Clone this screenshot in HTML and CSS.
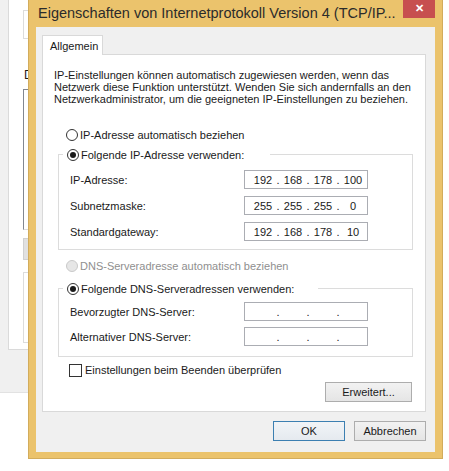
FILE: index.html
```html
<!DOCTYPE html>
<html lang="de">
<head>
    <meta charset="UTF-8">
    <title>Eigenschaften von Internetprotokoll Version 4 (TCP/IPv4)</title>
    <link rel="stylesheet" href="styles.css">
</head>
<body>
    <div class="desk">
        <!-- window behind the dialog -->
        <div class="backwin">
            <div class="bw-panel">
                <div class="bw-box bw-top"></div>
                <div class="bw-caption">D</div>
                <div class="bw-box bw-list"></div>
                <div class="bw-btn"></div>
                <div class="bw-box bw-desc"></div>
            </div>
        </div>

        <div class="dialog">
            <div class="titlebar">
                <span class="title">Eigenschaften von Internetprotokoll Version 4 (TCP/IP...</span>
                <span class="close">&#x2715;</span>
            </div>
            <div class="client">
                <div class="tabs"><div class="tab">Allgemein</div></div>
                <div class="panel">
                    <p class="intro">IP-Einstellungen können automatisch zugewiesen werden, wenn das<br>Netzwerk diese Funktion unterstützt. Wenden Sie sich andernfalls an den<br>Netzwerkadministrator, um die geeigneten IP-Einstellungen zu beziehen.</p>

                    <div class="option opt-ip-auto"><span class="radio"></span>IP-Adresse automatisch beziehen</div>

                    <div class="group group-ip">
                        <div class="legend legend-ip"><span class="radio checked"></span>Folgende IP-Adresse verwenden:</div>
                        <div class="field-row first">
                            <span class="field-label">IP-Adresse:</span>
                            <div class="ipbox"><span>192</span><i>.</i><span>168</span><i>.</i><span>178</span><i>.</i><span>100</span></div>
                        </div>
                        <div class="field-row">
                            <span class="field-label">Subnetzmaske:</span>
                            <div class="ipbox"><span>255</span><i>.</i><span>255</span><i>.</i><span>255</span><i>.</i><span>0</span></div>
                        </div>
                        <div class="field-row">
                            <span class="field-label">Standardgateway:</span>
                            <div class="ipbox"><span>192</span><i>.</i><span>168</span><i>.</i><span>178</span><i>.</i><span>10</span></div>
                        </div>
                    </div>

                    <div class="option opt-dns-auto disabled"><span class="radio"></span>DNS-Serveradresse automatisch beziehen</div>

                    <div class="group group-dns">
                        <div class="legend legend-dns"><span class="radio checked"></span>Folgende DNS-Serveradressen verwenden:</div>
                        <div class="field-row first">
                            <span class="field-label">Bevorzugter DNS-Server:</span>
                            <div class="ipbox"><span></span><i>.</i><span></span><i>.</i><span></span><i>.</i><span></span></div>
                        </div>
                        <div class="field-row">
                            <span class="field-label">Alternativer DNS-Server:</span>
                            <div class="ipbox"><span></span><i>.</i><span></span><i>.</i><span></span><i>.</i><span></span></div>
                        </div>
                    </div>

                    <div class="option opt-check"><span class="checkbox"></span>Einstellungen beim Beenden überprüfen</div>

                    <div class="advanced-row"><button class="btn btn-advanced">Erweitert...</button></div>
                </div>
                <div class="actions">
                    <button class="btn btn-ok">OK</button>
                    <button class="btn">Abbrechen</button>
                </div>
            </div>
        </div>
    </div>
</body>
</html>
```

FILE: styles.css
```css
body {
    margin: 0;
    background: #fff;
    font-family: "Liberation Sans", Arial, sans-serif;
    font-size: 11px;
    color: #1a1a1a;
}
.desk {
    position: relative;
    width: 449px;
    height: 471px;
    overflow: hidden;
}

/* window in the background */
.backwin {
    position: absolute;
    left: 0;
    top: 0;
    width: 80px;
    height: 393px;
    background: #f0f0f0;
    border-bottom: 1px solid #e2e2e2;
    padding-left: 8px;
    box-sizing: border-box;
}
.bw-panel {
    height: 350px;
    background: #fff;
    border-left: 1px solid #dadada;
    border-bottom: 1px solid #dadada;
    box-sizing: border-box;
    padding-left: 14px;
    padding-top: 10px;
}
.bw-box {
    border: 1px solid #dcdcdc;
    background: #fff;
}
.bw-top {
    height: 27px;
}
.bw-caption {
    margin-top: 30px;
    margin-left: 1px;
    font-size: 12px;
    line-height: 12px;
}
.bw-list {
    margin-top: 8px;
    height: 139px;
    border-left-color: #828790;
    border-top-color: #828790;
}
.bw-btn {
    margin-top: 8px;
    height: 20px;
    background: #e1e1e1;
    border: 1px solid #d0d0d0;
}
.bw-desc {
    margin-top: 12px;
    height: 69px;
}

/* dialog window */
.dialog {
    position: absolute;
    left: 28px;
    top: 0;
    width: 415px;
    height: 459px;
    background: #ebc36c;
    border: 1px solid #d2ac5c;
    border-top: none;
    box-sizing: border-box;
    display: flex;
    flex-direction: column;
}
.titlebar {
    height: 27px;
    display: flex;
    align-items: flex-start;
    position: relative;
}
.title {
    margin-left: 9px;
    margin-top: 3px;
    font-size: 14.5px;
    line-height: 20px;
    color: #2b2b2b;
    white-space: nowrap;
}
.close {
    position: absolute;
    right: 7px;
    top: 0;
    width: 32px;
    height: 18px;
    background: #c74f4f;
    color: #fff;
    font-size: 11px;
    font-weight: bold;
    line-height: 17px;
    text-align: center;
}
.client {
    flex: 1;
    margin: 0 7px 6px 7px;
    background: #f0f0f0;
    padding-left: 6px;
    padding-top: 8px;
}
.tabs {
    height: 19px;
    position: relative;
    z-index: 1;
}
.tab {
    width: 61px;
    height: 20px;
    box-sizing: border-box;
    background: #fff;
    border: 1px solid #d9d9d9;
    border-bottom: none;
    padding-left: 7px;
    line-height: 20px;
}
.panel {
    width: 384px;
    height: 358px;
    box-sizing: border-box;
    background: #fff;
    border: 1px solid #d9d9d9;
}
.intro {
    margin: 14px 0 0 11px;
    line-height: 12px;
    white-space: nowrap;
}
.option {
    height: 16px;
    display: flex;
    align-items: center;
    padding-left: 23px;
    white-space: nowrap;
}
.opt-ip-auto {
    margin-top: 22px;
}
.opt-dns-auto {
    margin-top: 8px;
}
.opt-check {
    margin-top: 5px;
    padding-left: 26px;
}
.disabled {
    color: #8f8f8f;
}
.radio {
    width: 12px;
    height: 12px;
    border: 1px solid #333;
    border-radius: 50%;
    box-sizing: border-box;
    background: #fff;
    margin-right: 2px;
    position: relative;
    flex: none;
}
.radio.checked::after {
    content: "";
    position: absolute;
    left: 2px;
    top: 2px;
    width: 6px;
    height: 6px;
    border-radius: 50%;
    background: #1a1a1a;
}
.disabled .radio {
    border-color: #c9c9c9;
    background: #e6e6e6;
}
.checkbox {
    width: 13px;
    height: 13px;
    border: 1px solid #333;
    box-sizing: border-box;
    background: #fff;
    margin-right: 3px;
    flex: none;
}
.group {
    margin-left: 15px;
    margin-right: 12px;
    border: 1px solid #dcdcdc;
}
.group-ip {
    margin-top: 11px;
    padding-bottom: 8px;
}
.group-dns {
    margin-top: 14px;
    padding-bottom: 10px;
}
.legend {
    height: 16px;
    margin-top: -8px;
    margin-left: 4px;
    padding-left: 4px;
    background: #fff;
    display: flex;
    align-items: center;
    white-space: nowrap;
    box-sizing: border-box;
}
.legend-ip {
    width: 207px;
}
.legend-dns {
    width: 255px;
}
.field-row {
    display: flex;
    align-items: center;
    height: 19px;
    margin-top: 7px;
    padding-left: 11px;
}
.field-row.first {
    margin-top: 7px;
}
.group-dns .field-row.first {
    margin-top: 5px;
}
.group-dns .field-row {
    margin-top: 6px;
}
.field-label {
    width: 174px;
    flex: none;
}
.ipbox {
    width: 124px;
    height: 19px;
    box-sizing: border-box;
    border: 1px solid #abadb3;
    display: flex;
    align-items: center;
    padding-left: 6px;
}
.ipbox span {
    width: 24px;
    text-align: center;
}
.ipbox i {
    font-style: normal;
    width: 6px;
    text-align: center;
}
.advanced-row {
    display: flex;
    justify-content: flex-end;
    margin-top: 4px;
    padding-right: 13px;
}
.btn {
    font-family: inherit;
    font-size: 11px;
    color: #1a1a1a;
    height: 20px;
    padding: 0;
    background: linear-gradient(#f2f2f2, #e5e5e5);
    border: 1px solid #adadad;
}
.btn-advanced {
    width: 87px;
}
.actions {
    display: flex;
    justify-content: flex-end;
    gap: 9px;
    width: 384px;
    margin-top: 9px;
}
.actions .btn {
    width: 72px;
}
.btn-ok {
    border-color: #3c7fb1;
    background: linear-gradient(#f1f4f7, #e5eaef);
}
```
